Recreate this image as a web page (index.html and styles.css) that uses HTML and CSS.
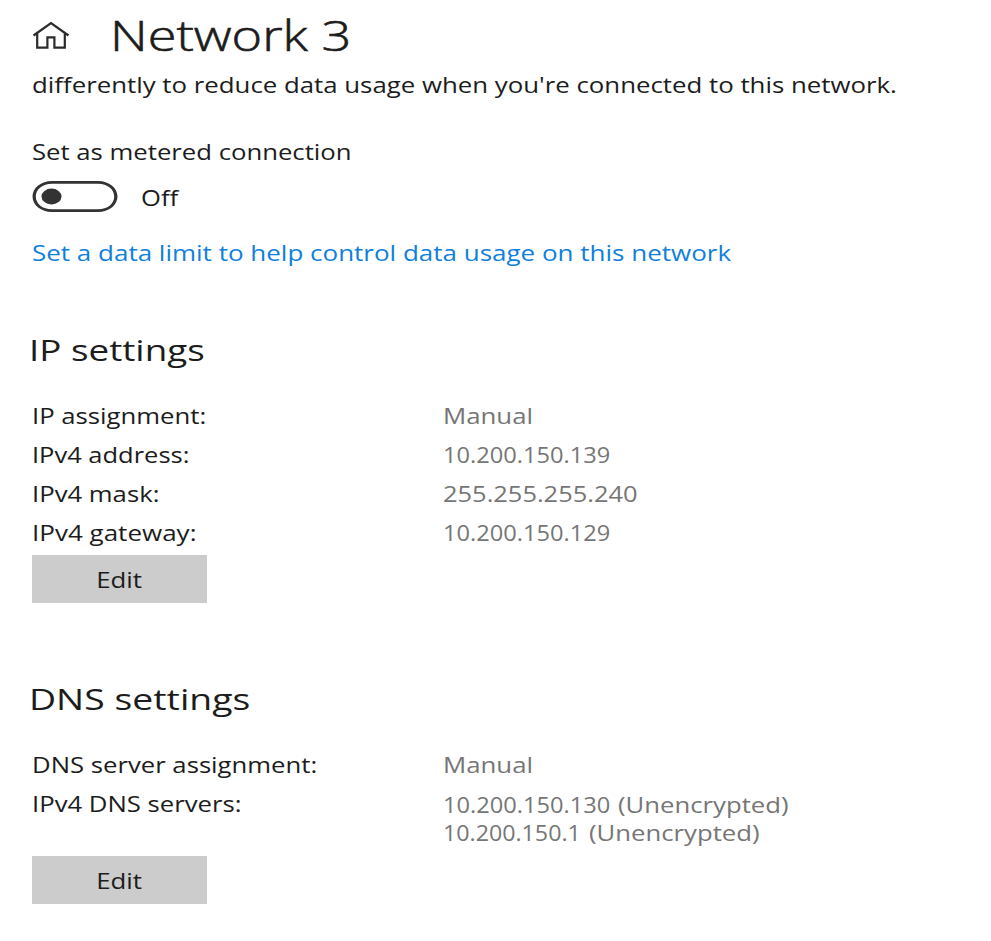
FILE: index.html
```html
<!DOCTYPE html>
<html lang="en">
<head>
<meta charset="utf-8">
<title>Network 3</title>
<link rel="stylesheet" href="styles.css">
</head>
<body>
<main class="page">
  <header class="header">
    <svg class="home" viewBox="0 0 38 30" fill="none" stroke="#2b2b2b" stroke-width="2.2">
      <path d="M1.500 15.500 19 3.200 36.500 15.500M5.200 13.500V27.700H15.400V17.300H22.400V27.700H32.800V13.500"/>
    </svg>
    <h1 class="title">Network 3</h1>
  </header>
  <p class="text intro">differently to reduce data usage when you're connected to this network.</p>
  <p class="text meter-label">Set as metered connection</p>
  <div class="switch-row">
    <svg class="switch" viewBox="0 0 86 32">
      <path fill="#333" fill-rule="evenodd" d="M20 0H66C77 0 85.500 7 85.500 15.500S77 31 66 31H20C9 31 .5 24 .5 15.500S9 0 20 0ZM20 2.700C10.500 2.700 3.800 8.200 3.800 15.500S10.500 28.300 20 28.300H66C75.500 28.300 82.200 22.800 82.200 15.500S75.500 2.700 66 2.700Z"/>
      <ellipse cx="19.500" cy="15.500" rx="10" ry="7.900" fill="#333"/>
    </svg>
    <span class="text">Off</span>
  </div>
  <a class="text link">Set a data limit to help control data usage on this network</a>

  <section class="section">
    <h2 class="heading ip-heading">IP settings</h2>
    <dl class="details">
      <dt class="text">IP assignment:</dt><dd class="text word">Manual</dd>
      <dt class="text address-label">IPv4 address:</dt><dd class="text ip">10.200.150.139</dd>
      <dt class="text">IPv4 mask:</dt><dd class="text mask">255.255.255.240</dd>
      <dt class="text gateway-label">IPv4 gateway:</dt><dd class="text ip">10.200.150.129</dd>
    </dl>
    <button class="button"><span class="text">Edit</span></button>
  </section>

  <section class="section dns">
    <h2 class="heading">DNS settings</h2>
    <dl class="details">
      <dt class="text">DNS server assignment:</dt><dd class="text word">Manual</dd>
      <dt class="text">IPv4 DNS servers:</dt>
      <dd class="servers">
        <div class="server"><span class="text ip">10.200.150.130</span><span class="text">(Unencrypted)</span></div>
        <div class="server second"><span class="text ip">10.200.150.1</span><span class="text">(Unencrypted)</span></div>
      </dd>
    </dl>
    <button class="button"><span class="text">Edit</span></button>
  </section>
</main>
</body>
</html>
```
FILE: styles.css
```css
* { box-sizing: border-box; }
body { margin: 0; background: #fff; color: #1c1c1c; font-family: "Open Sans", "Noto Sans", sans-serif; }
h1, h2, p, dl, dd { margin: 0; font-weight: 400; }
.page { width: 991px; height: 941px; padding: 4px 0 0 32px; overflow: hidden; }

/* Wide lettering: glyphs are stretched horizontally from their left edge. */
.text { display: block; width: max-content; font-size: 21.5px; line-height: 30px; white-space: nowrap; transform: scaleX(1.195); transform-origin: left; }

.header { display: flex; height: 60px; }
.home { width: 38px; height: 30px; margin: 16px 40px 0 0; }
.title { margin-top: 1px; font-size: 43px; font-weight: 300; line-height: 60px; white-space: nowrap; transform: scaleX(1.215); transform-origin: left; -webkit-text-stroke: 0.6px #1c1c1c; }

.intro { margin-top: 6px; transform: scaleX(1.2); }
.meter-label { margin-top: 37px; }
.switch-row { display: flex; height: 32px; margin-top: 14px; }
.switch { width: 86px; height: 32px; margin: 0 23px 0 -0.500px; }
.switch-row .text { margin-top: 2px; transform: scaleX(1.19); }
.link { margin-top: 25px; color: #0f80dc; transform: scaleX(1.209); }

.section { margin-top: 62px; }
.heading { width: max-content; margin-left: -3px; font-size: 29.5px; line-height: 40px; transform: scaleX(1.267); transform-origin: left; }
.ip-heading { transform: scaleX(1.247); }
.details { display: grid; grid-template-columns: 411px max-content; grid-auto-rows: minmax(39px, auto); margin-top: 26px; }
.details > .text { line-height: 39px; }
.details dd { color: #767676; }
.details .address-label { transform: scaleX(1.185); }
.details .gateway-label { transform: scaleX(1.21); }
.word { transform: scaleX(1.2); }
.ip { transform: scaleX(1.1); }
.mask { transform: scaleX(1.183); }

.servers { padding-top: 7px; }
.server { display: flex; gap: 22.500px; height: 28px; }
.server .text { line-height: 28px; }
.second { gap: 18px; }
.second .ip { transform: scaleX(1.08); }

.button { display: flex; justify-content: center; width: 175px; height: 48px; margin: 3px 0 0; padding: 10px 0 0; border: 0; background: #ccc; color: #1c1c1c; font-family: inherit; }
.button .text { line-height: 30px; transform: scaleX(1.2); transform-origin: center; }
.dns { margin-top: 76px; }
.dns .button { margin-top: 9px; }
```
